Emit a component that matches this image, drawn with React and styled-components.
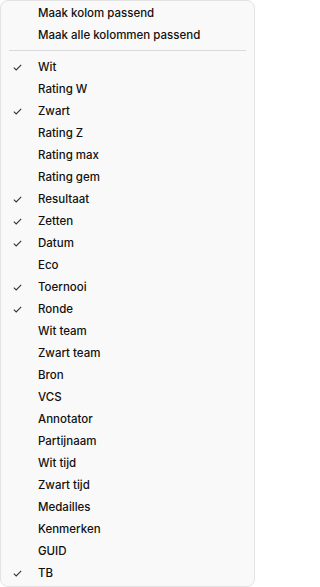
import { createGlobalStyle, styled } from 'styled-components';

const GlobalStyle = createGlobalStyle`
  html, body {
    margin: 0;
    padding: 0;
    background: #ffffff;
  }
  * {
    box-sizing: border-box;
  }
`;

const topItems = ['Maak kolom passend', 'Maak alle kolommen passend'];

const columns = [
  { label: 'Wit', checked: true },
  { label: 'Rating W' },
  { label: 'Zwart', checked: true },
  { label: 'Rating Z' },
  { label: 'Rating max' },
  { label: 'Rating gem' },
  { label: 'Resultaat', checked: true },
  { label: 'Zetten', checked: true },
  { label: 'Datum', checked: true },
  { label: 'Eco' },
  { label: 'Toernooi', checked: true },
  { label: 'Ronde', checked: true },
  { label: 'Wit team' },
  { label: 'Zwart team' },
  { label: 'Bron' },
  { label: 'VCS' },
  { label: 'Annotator' },
  { label: 'Partijnaam' },
  { label: 'Wit tijd' },
  { label: 'Zwart tijd' },
  { label: 'Medailles' },
  { label: 'Kenmerken' },
  { label: 'GUID' },
  { label: 'TB', checked: true },
];

function Check() {
  return (
    <svg width="9" height="7" viewBox="0 0 9 7" fill="none">
      <path d="M0.8 3.6 L3.2 5.9 L8.2 0.9" stroke="#333333" strokeWidth="1.1" />
    </svg>
  );
}

function App() {
  return (
    <>
      <GlobalStyle />
      <Menu>
        {topItems.map((label) => (
          <Item key={label}>
            <Mark />
            <Label>{label}</Label>
          </Item>
        ))}
        <Separator />
        {columns.map((col) => (
          <Item key={col.label}>
            <Mark>{col.checked && <Check />}</Mark>
            <Label>{col.label}</Label>
          </Item>
        ))}
      </Menu>
    </>
  );
}

const Menu = styled.div`
  width: 255px;
  height: 587px;
  background: #f9f9f9;
  border: 1px solid #e3e3e3;
  border-radius: 8px;
  padding: 1px 0 2px;
  display: flex;
  flex-direction: column;
  font-family: 'Segoe UI', Inter, 'Noto Sans', sans-serif;
  font-size: 11.5px;
  font-weight: 500;
  color: #111111;
`;

const Item = styled.div`
  height: 22px;
  display: flex;
  align-items: center;
  padding-left: 12px;
`;

const Mark = styled.span`
  width: 25px;
  display: flex;
  align-items: center;
  padding-top: 1px;
`;

const Label = styled.span`
  line-height: 22px;
  white-space: nowrap;
`;

const Separator = styled.div`
  height: 1px;
  margin: 4px 8px 5px 8px;
  background: #dadada;
`;

export default App;
